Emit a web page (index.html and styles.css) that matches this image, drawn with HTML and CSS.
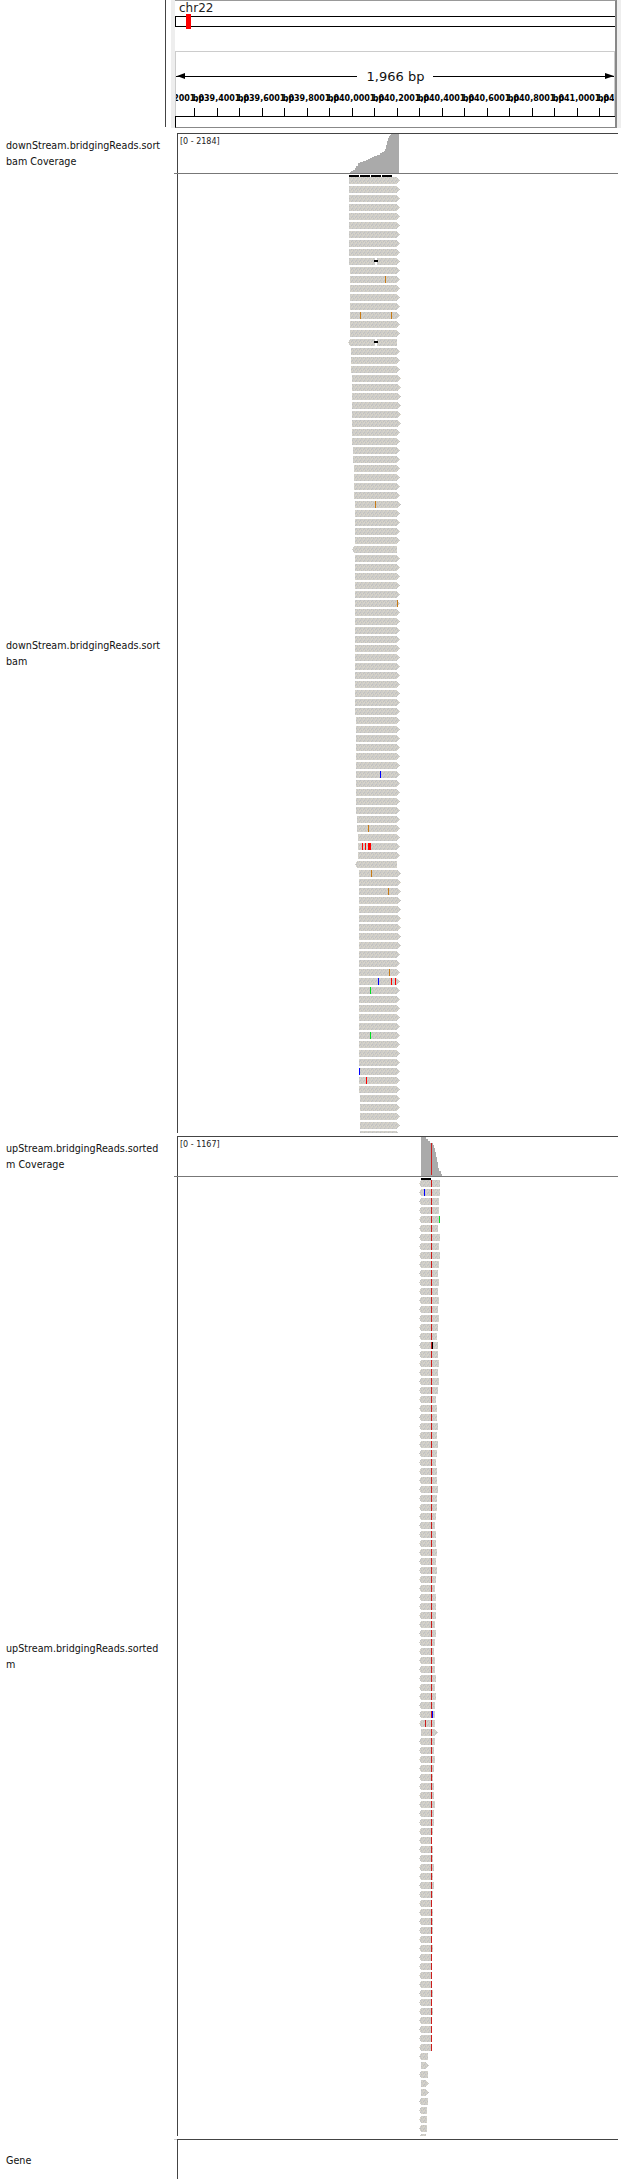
FILE: index.html
```html
<!DOCTYPE html>
<html lang="en">
<head>
    <meta charset="UTF-8">
    <title>IGV - chr22</title>
    <link rel="stylesheet" href="styles.css">
</head>
<body>
    <div class="header">
        <div class="header-rule"></div>
        <div class="header-panel">
            <div class="chr-name">chr22</div>
            <div class="ideogram"><span class="ideogram-pos"></span></div>
            <div class="ruler">
                <div class="span-row">
                    <span class="span-arrow span-left"></span>
                    <span class="span-text">1,966 bp</span>
                    <span class="span-arrow span-right"></span>
                </div>
                <div class="ruler-labels">
                    <span>1,039,200 bp</span>
                    <span>1,039,400 bp</span>
                    <span>1,039,600 bp</span>
                    <span>1,039,800 bp</span>
                    <span>1,040,000 bp</span>
                    <span>1,040,200 bp</span>
                    <span>1,040,400 bp</span>
                    <span>1,040,600 bp</span>
                    <span>1,040,800 bp</span>
                    <span>1,041,000 bp</span>
                    <span>1,041,200 bp</span>
                </div>
                <div class="ruler-ticks" id="rulerTicks"></div>
            </div>
            <div class="ruler-foot"></div>
        </div>
    </div>

    <div class="track track-coverage">
        <div class="track-name">downStream.bridgingReads.sort<br>bam Coverage</div>
        <div class="track-canvas">
            <span class="range">[0 - 2184]</span>
            <svg class="plot" width="440" height="40" viewBox="178 134 440 40">
                <polygon class="cov" points="350,173 350,172 351,172 351,171 353,171 353,170 355,170 355,168 356,168 356,166 358,166 358,163 360,163 360,162 363,162 363,161 366,161 366,160 368,160 368,159 370,159 370,158 372,158 372,157 374,157 374,156 377,156 377,155 380,155 380,153 382,153 382,152 384,152 384,151 385,151 385,149 386,149 386,145 387,145 387,141 388,141 388,138 389,138 389,136 390,136 390,135 391,135 391,134 399,134 399,173"/>
            </svg>
        </div>
    </div>
    <div class="track track-reads">
        <div class="track-name">downStream.bridgingReads.sort<br>bam</div>
        <div class="track-canvas">
            <svg class="plot" id="downReads" width="440" height="959" viewBox="178 174 440 959"></svg>
        </div>
    </div>

    <div class="track-gap"></div>

    <div class="track track-coverage">
        <div class="track-name">upStream.bridgingReads.sorted<br>m Coverage</div>
        <div class="track-canvas">
            <span class="range">[0 - 1167]</span>
            <svg class="plot" width="440" height="40" viewBox="178 1137 440 40">
                <polygon class="cov" points="421,1176 421,1137 426,1137 426,1139 428,1139 428,1141 430,1141 430,1143 433,1143 433,1145 434,1145 434,1148 435,1148 435,1152 436,1152 436,1157 437,1157 437,1162 438,1162 438,1168 439,1168 439,1171 441,1171 441,1174 442,1174 442,1176"/>
                <rect class="cov-mismatch" x="431" y="1143" width="1" height="32"/>
            </svg>
        </div>
    </div>
    <div class="track track-reads">
        <div class="track-name">upStream.bridgingReads.sorted<br>m</div>
        <div class="track-canvas">
            <svg class="plot" id="upReads" width="440" height="959" viewBox="178 1177 440 959"></svg>
        </div>
    </div>

    <div class="track-gap"></div>

    <div class="track track-gene">
        <div class="track-name">Gene</div>
        <div class="track-canvas"></div>
    </div>

    <script src="reads.js"></script>
</body>
</html>
```

FILE: styles.css
```css
html, body {
    margin: 0;
    padding: 0;
    background: #ffffff;
}
body {
    width: 640px;
    height: 2179px;
    overflow: hidden;
    font-family: "DejaVu Sans", sans-serif;
    color: #000000;
}

/* header: chromosome bar and ruler */
.header {
    display: flex;
    height: 133px;
    padding-left: 165px;
    box-sizing: border-box;
}
.header-rule {
    width: 1px;
    height: 127px;
    background: #444444;
}
.header-panel {
    width: 442px;
    height: 128px;
    margin-left: 9px;
    box-sizing: border-box;
    display: flex;
    flex-direction: column;
    background: #ffffff;
    border-top: 1px solid #999999;
    border-right: 2px solid #888888;
    box-shadow: -4px 0 0 #eeeeee, 4px 0 0 #eeeeee;
}
.chr-name {
    height: 15px;
    padding-left: 4px;
    font-size: 12px;
    line-height: 14px;
    color: #222222;
}
.ideogram {
    position: relative;
    height: 9px;
    border-top: 1px solid #000000;
    border-bottom: 1px solid #000000;
    border-left: 1px solid #000000;
}
.ideogram-pos {
    position: absolute;
    left: 10px;
    top: -3px;
    width: 5px;
    height: 15px;
    background: #ff0000;
}
.ruler {
    height: 66px;
    margin-top: 24px;
    box-sizing: border-box;
    border: 1px solid #cccccc;
    border-bottom: 0;
    overflow: hidden;
    display: flex;
    flex-direction: column;
}
.span-row {
    display: flex;
    align-items: center;
    height: 18px;
    margin-top: 16px;
}
.span-text {
    padding: 0 9px 0 10px;
    font-size: 13px;
    line-height: 18px;
    color: #111111;
}
.span-arrow {
    position: relative;
    flex: 1;
    height: 1px;
    background: #000000;
}
.span-left::before,
.span-right::after {
    content: "";
    position: absolute;
    top: -3px;
    border-top: 3.5px solid transparent;
    border-bottom: 3.5px solid transparent;
}
.span-left::before {
    left: 1px;
    border-right: 8px solid #000000;
}
.span-right::after {
    right: 0;
    border-left: 9px solid #000000;
}
.ruler-labels {
    display: flex;
    margin-top: 7px;
    margin-left: -24px;
    height: 12px;
}
.ruler-labels span {
    flex: 0 0 45px;
    min-width: 0;
    display: flex;
    justify-content: center;
    white-space: nowrap;
    font-size: 8px;
    font-weight: bold;
    line-height: 12px;
}
.ruler-ticks {
    display: flex;
    height: 9px;
    margin-top: 3px;
    padding-left: 18px;
}
.ruler-ticks i {
    flex: 0 0 22.5px;
    box-sizing: border-box;
    border-left: 1px solid #000000;
}
.ruler-foot {
    height: 10px;
    border-top: 1px solid #000000;
    border-left: 1px solid #000000;
    border-bottom: 1px solid #888888;
}

/* tracks */
.track {
    display: flex;
}
.track-coverage {
    height: 41px;
}
.track-reads {
    height: 959px;
}
.track-gene {
    height: 40px;
}
.track-gap {
    height: 3px;
}
.track-name {
    width: 177px;
    padding-left: 6px;
    box-sizing: border-box;
    align-self: center;
    font-size: 9.6px;
    line-height: 16px;
    color: #111111;
}
.track-gene .track-name {
    padding-top: 3px;
}
.track-canvas {
    position: relative;
    width: 441px;
    box-sizing: border-box;
    border-left: 1px solid #444444;
}
.track-coverage .track-canvas,
.track-gene .track-canvas {
    border-top: 1px solid #444444;
}
.track-coverage .track-canvas::after {
    content: "";
    position: absolute;
    left: -4px;
    right: 0;
    bottom: 0;
    height: 1px;
    background: #777777;
}
.track-gene .track-canvas::before {
    content: "";
    position: absolute;
    left: -4px;
    top: -1px;
    width: 3px;
    height: 1px;
    background: #cccccc;
}
.range {
    position: absolute;
    left: 2px;
    top: 2px;
    font-size: 8px;
    line-height: 11px;
    color: #222222;
}
.plot {
    display: block;
    shape-rendering: crispEdges;
}
.cov {
    fill: #aaaaaa;
}
.cov-mismatch {
    fill: #cc2020;
}
```

FILE: reads.js
```js
const ROW_PITCH = 9;
const READ_H = 7;

const MARK = {
    o: '#c87a14',
    r: '#ff0000',
    d: '#cc1c1c',
    b: '#0000ff',
    g: '#00e020',
    k: '#000000'
};

// ruler ticks
const ticks = document.getElementById('rulerTicks');
for (let i = 0; i < 19; i++) {
    ticks.appendChild(document.createElement('i'));
}

function readShape(r, y) {
    const top = y, mid = y + READ_H / 2, bot = y + READ_H;
    if (r.left) {
        return `${r.x - 2},${mid} ${r.x},${top} ${r.end},${top} ${r.end},${bot} ${r.x},${bot}`;
    }
    return `${r.x},${top} ${r.end},${top} ${r.end + 3},${mid} ${r.end},${bot} ${r.x},${bot}`;
}

function drawTrack(svg, rows, firstY, bars) {
    const id = svg.id + 'Fill';
    let out = `<defs><pattern id="${id}" patternUnits="userSpaceOnUse" width="4" height="4">
        <rect width="4" height="4" fill="#cecdc9"/>
        <rect x="0" y="0" width="1" height="1" fill="#c0c0c0"/>
        <rect x="2" y="1" width="1" height="1" fill="#dbd6c8"/>
        <rect x="1" y="2" width="1" height="1" fill="#c2c2c2"/>
        <rect x="3" y="3" width="1" height="1" fill="#dbd6c8"/>
        <rect x="3" y="1" width="1" height="1" fill="#c0c0c0"/>
        <rect x="0" y="2" width="1" height="1" fill="#dbd6c8"/>
    </pattern></defs>`;

    bars.forEach(b => {
        out += `<rect x="${b[0]}" y="${firstY - 2}" width="${b[1] - b[0]}" height="2" fill="#000"/>`;
    });

    rows.forEach((r, n) => {
        const y = firstY + n * ROW_PITCH;
        out += `<polygon points="${readShape(r, y)}" fill="url(#${id})"/>`;
        if (r.gap) {
            out += `<rect x="${r.gap}" y="${y}" width="2" height="${READ_H}" fill="#fff"/>`;
            out += `<rect x="${r.gap - 1}" y="${y + 2}" width="4" height="2" fill="#000"/>`;
        }
        (r.marks || []).forEach(m => {
            const w = m[2] || 1;
            out += `<rect x="${m[0]}" y="${y}" width="${w}" height="${READ_H}" fill="${MARK[m[1]]}"/>`;
        });
    });
    svg.innerHTML = out;
}

// downstream track: [how many rows, left edge, right edge]
const downRuns = [
    [10, 349, 397], [8, 350, 397], [1, 350, 397], [3, 351, 397], [6, 352, 398],
    [2, 352, 397], [2, 353, 397], [4, 354, 397], [5, 355, 397], [1, 354, 397],
    [18, 355, 397], [11, 356, 397], [2, 357, 397], [4, 358, 397], [9, 359, 398],
    [16, 359, 397], [2, 360, 397], [5, 360, 397], [1, 361, 397]
];
const downRows = [];
downRuns.forEach(run => {
    for (let i = 0; i < run[0]; i++) {
        downRows.push({ x: run[1], end: run[2] });
    }
});

Object.assign(downRows[9], { gap: 375 });
Object.assign(downRows[11], { marks: [[385, 'o']] });
Object.assign(downRows[15], { marks: [[360, 'o'], [391, 'o']] });
Object.assign(downRows[18], { left: true, x: 350, gap: 375 });
Object.assign(downRows[36], { end: 398, marks: [[375, 'o']] });
Object.assign(downRows[41], { left: true, x: 354 });
Object.assign(downRows[47], { marks: [[397, 'o']] });
Object.assign(downRows[66], { marks: [[380, 'b']] });
Object.assign(downRows[72], { marks: [[368, 'o']] });
Object.assign(downRows[74], { marks: [[362, 'r'], [365, 'r'], [368, 'r', 3]] });
Object.assign(downRows[76], { left: true, x: 357 });
Object.assign(downRows[77], { marks: [[371, 'o']] });
Object.assign(downRows[79], { marks: [[388, 'o']] });
Object.assign(downRows[88], { marks: [[389, 'o']] });
Object.assign(downRows[89], { marks: [[378, 'b'], [391, 'r'], [395, 'r']] });
Object.assign(downRows[90], { marks: [[370, 'g']] });
Object.assign(downRows[95], { marks: [[370, 'g']] });
Object.assign(downRows[99], { marks: [[359, 'b']] });
Object.assign(downRows[100], { marks: [[366, 'r']] });

drawTrack(document.getElementById('downReads'), downRows, 177, [
    [349, 359], [360, 370], [371, 381], [382, 392]
]);

// upstream track: the reads get shorter towards the bottom
const upRows = [];
for (let n = 0; n < 97; n++) {
    const wobble = [0, 1, 0, -1, 0, 0, 1][n % 7];
    upRows.push({
        x: 421,
        left: true,
        end: Math.round(439.5 - n * 0.085) + wobble,
        marks: [[431, 'd']]
    });
}
// the short tail has no mismatch column
[[428, true], [426, false], [428, true], [426, false], [426, false],
 [428, true], [427, true], [427, true], [427, true], [426, true]].forEach(t => {
    upRows.push({ x: 421, end: t[0], left: t[1] });
});

Object.assign(upRows[0], { end: 440 });
Object.assign(upRows[1], { end: 440, marks: [[424, 'b'], [431, 'd']] });
Object.assign(upRows[2], { end: 439 });
Object.assign(upRows[3], { end: 439 });
Object.assign(upRows[4], { end: 440, marks: [[431, 'd'], [439, 'g']] });
Object.assign(upRows[5], { end: 438 });
Object.assign(upRows[18], { marks: [[431, 'd'], [432, 'k']] });
Object.assign(upRows[59], { end: 435, marks: [[431, 'd'], [432, 'b']] });
Object.assign(upRows[60], { end: 435, marks: [[425, 'd'], [431, 'd']] });
Object.assign(upRows[61], { end: 435, left: false });

drawTrack(document.getElementById('upReads'), upRows, 1180, [[421, 431]]);
```
